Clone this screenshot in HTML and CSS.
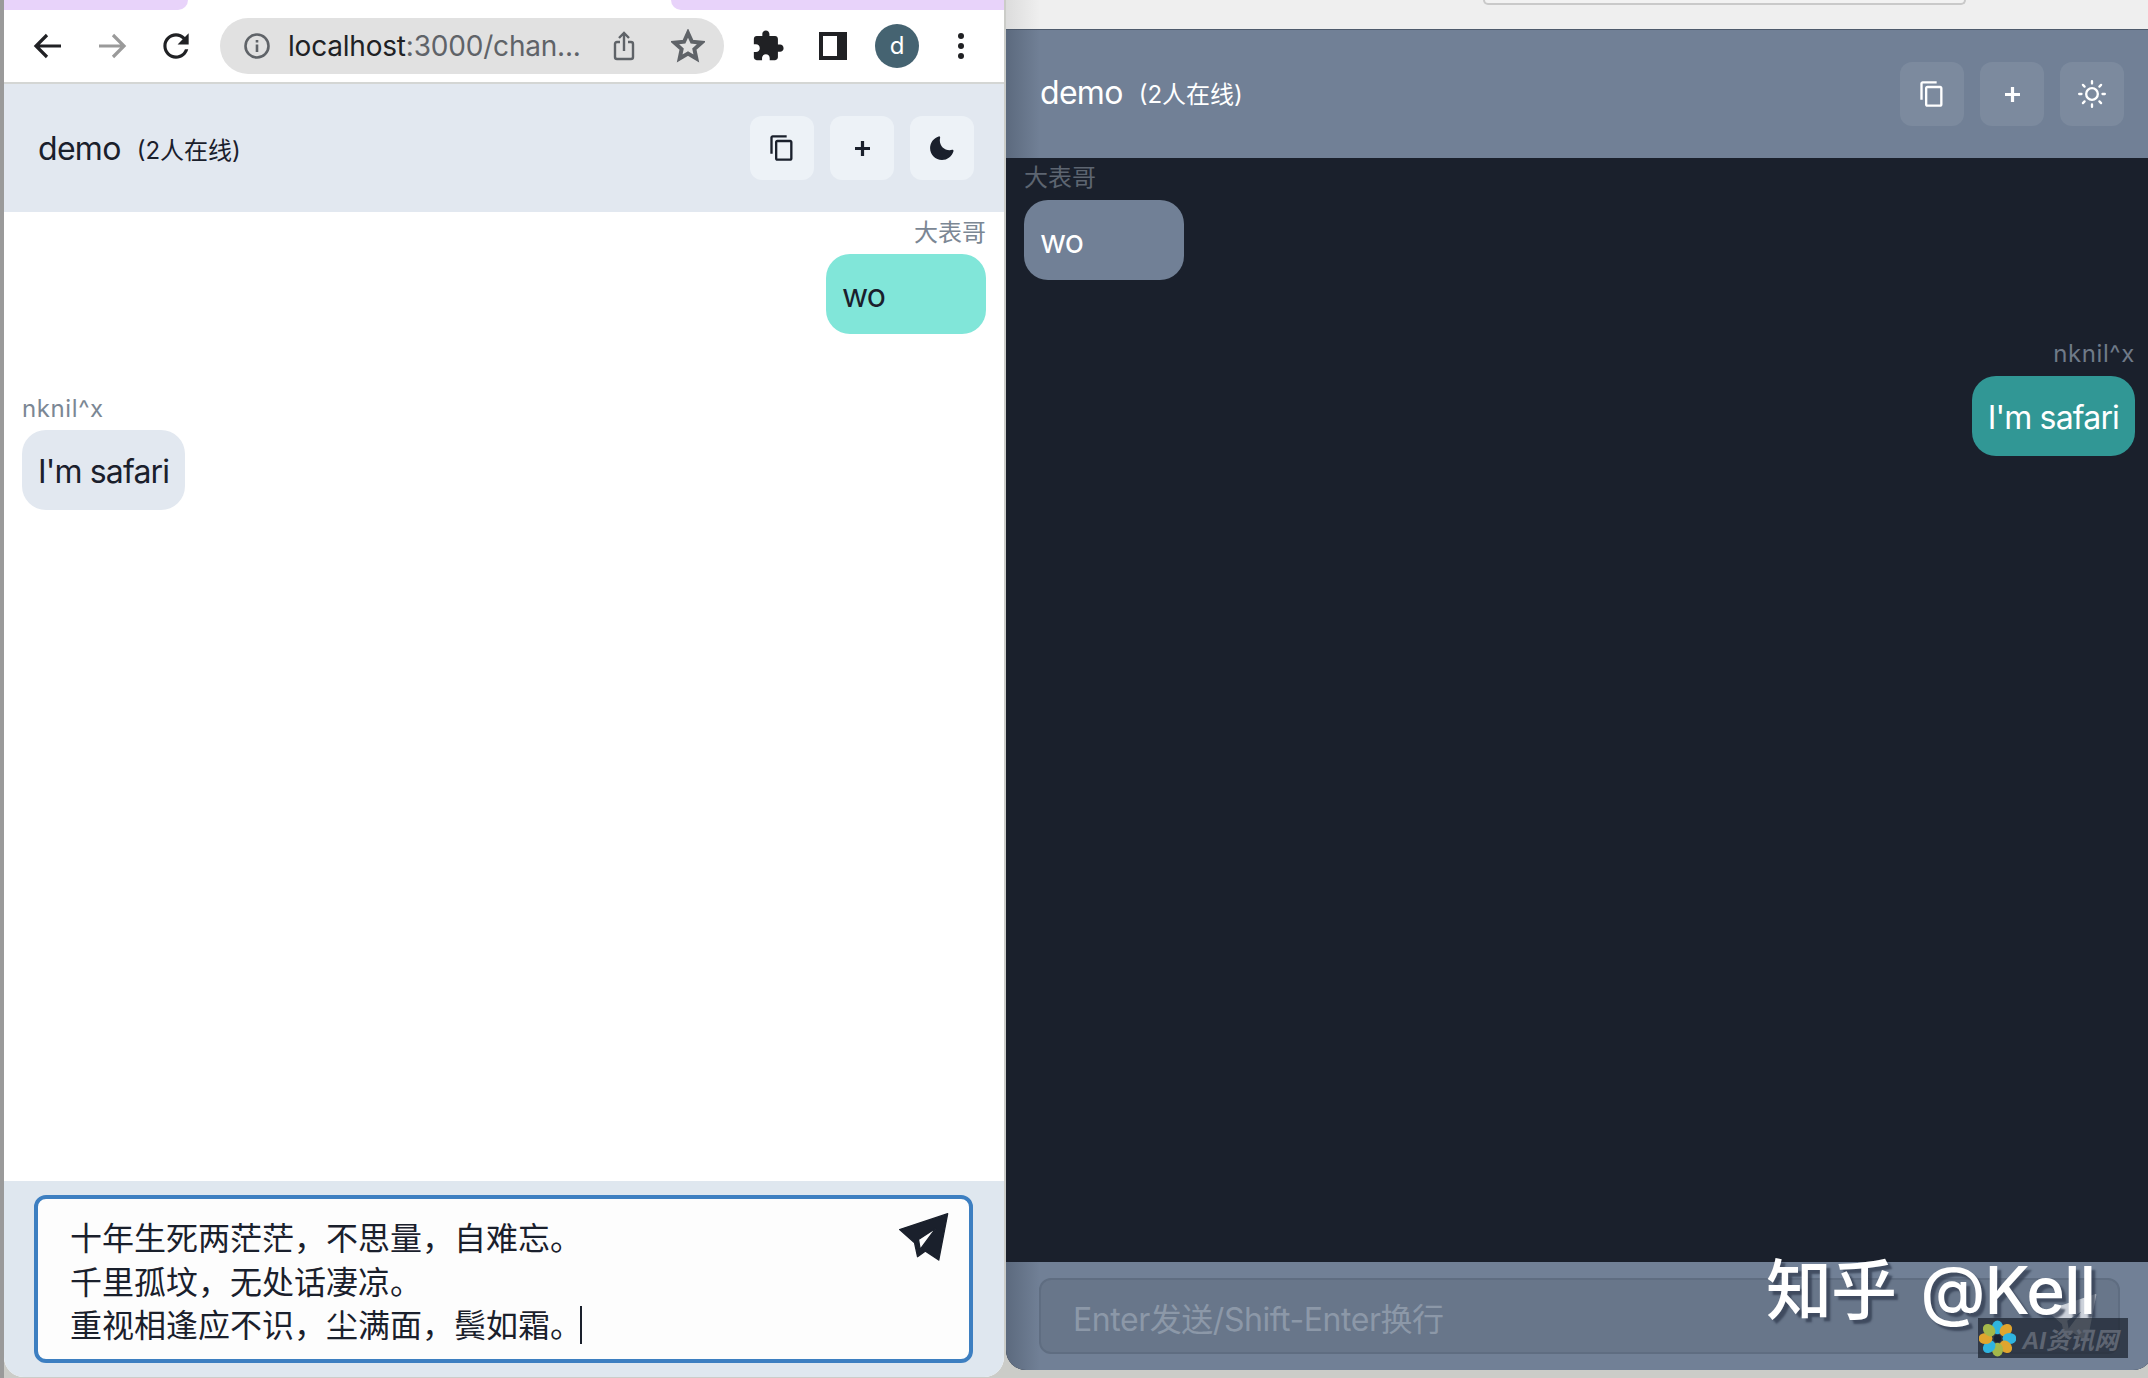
FILE: index.html
```html
<!DOCTYPE html>
<html lang="zh">
<head>
<meta charset="utf-8">
<title>demo</title>
<link rel="stylesheet" href="styles.css">
</head>
<body>
<main class="desk">
  <section class="win win-light">
    <div class="tabstrip">
      <div class="tab-left"></div>
      <div class="tab-active"></div>
      <div class="tab-right"></div>
    </div>
    <div class="toolbar">
      <svg class="nav nav-back" viewBox="0 0 32 32"><path d="M29 16H5M15 5 4 16l11 11"/></svg>
      <svg class="nav nav-forward" viewBox="0 0 32 32"><path d="M3 16h24M17 5l11 11-11 11"/></svg>
      <svg class="reload" viewBox="0 0 24 24"><path d="M17.65 6.35C16.2 4.9 14.21 4 12 4c-4.42 0-7.99 3.58-7.99 8s3.57 8 7.99 8c3.73 0 6.84-2.55 7.73-6h-2.08c-.82 2.33-3.04 4-5.65 4-3.31 0-6-2.69-6-6s2.69-6 6-6c1.66 0 3.14.69 4.22 1.78L13 11h7V4l-2.35 2.35z"/></svg>
      <div class="omnibox">
        <svg class="info" viewBox="0 0 28 28"><circle cx="14" cy="14" r="11.5"/><path d="M14 12.5V20M14 8v2.5"/></svg>
        <span class="url"><span class="url-host">localhost</span>:3000/chan...</span>
        <svg class="share" viewBox="0 0 24 32"><path d="M8 12H5q-2 0-2 2v13q0 2 2 2h14q2 0 2-2V14q0-2-2-2h-3M12 21V3M7 8l5-5 5 5"/></svg>
        <svg class="star" viewBox="0 0 24 24"><path d="m12 2.8 2.8 6.2 6.7.7-5 4.5 1.4 6.6-5.9-3.4-5.9 3.4 1.4-6.6-5-4.5 6.7-.7z"/></svg>
      </div>
      <svg class="puzzle" viewBox="0 0 24 24"><path d="M20.5 11H19V7c0-1.1-.9-2-2-2h-4V3.5C13 2.12 11.88 1 10.5 1S8 2.12 8 3.5V5H4c-1.1 0-1.99.9-1.99 2v3.8H3.5c1.49 0 2.7 1.21 2.7 2.7s-1.21 2.7-2.7 2.7H2V20c0 1.1.9 2 2 2h3.8v-1.5c0-1.49 1.21-2.7 2.7-2.7 1.49 0 2.7 1.21 2.7 2.7V22H17c1.1 0 2-.9 2-2v-4h1.5c1.38 0 2.5-1.12 2.5-2.5S21.88 11 20.5 11z"/></svg>
      <div class="sidepanel"><div class="sidepanel-gap"></div></div>
      <div class="avatar">d</div>
      <div class="kebab"><i></i><i></i><i></i></div>
    </div>
    <header class="app-header">
      <div class="title"><span class="room">demo</span><span class="count">(2人在线)</span></div>
      <div class="actions">
        <button class="action"><svg class="ic-copy" viewBox="0 0 24 24"><path d="M16 1H4c-1.1 0-2 .9-2 2v14h2V3h12V1zm3 4H8c-1.1 0-2 .9-2 2v14c0 1.1.9 2 2 2h11c1.1 0 2-.9 2-2V7c0-1.1-.9-2-2-2zm0 16H8V7h11v14z"/></svg></button>
        <button class="action"><svg class="ic-plus" viewBox="0 0 14 14"><path d="M7 0v14M0 7h14"/></svg></button>
        <button class="action"><svg class="ic-moon" viewBox="0 0 24 24"><path d="M21.4,13.7C20.6,13.9,19.8,14,19,14c-5,0-9-4-9-9c0-0.8,0.1-1.6,0.3-2.4c0.1-0.3,0-0.7-0.3-1 c-0.3-0.3-0.6-0.4-1-0.3C4.3,2.7,1,7.1,1,12c0,6.1,4.9,11,11,11c4.9,0,9.3-3.3,10.6-8.1c0.1-0.3,0-0.7-0.3-1 C22.1,13.7,21.7,13.6,21.4,13.7z"/></svg></button>
      </div>
    </header>
    <div class="messages">
      <div class="msg msg-mine">
        <div class="sender">大表哥</div>
        <div class="bubble bubble-teal">wo</div>
      </div>
      <div class="msg">
        <div class="sender sender-latin">nknil^x</div>
        <div class="bubble bubble-gray">I'm safari</div>
      </div>
    </div>
    <div class="composer">
      <div class="field field-focus">
        <div class="line">十年生死两茫茫，不思量，自难忘。</div>
        <div class="line">千里孤坟，无处话凄凉。</div>
        <div class="line">重视相逢应不识，尘满面，鬓如霜。<span class="caret"></span></div>
        <svg class="send" viewBox="50 45 160 155"><path fill-rule="evenodd" d="M58 100 203 52 176 192 136 165 112 182 103 140ZM168 95 115 130 120 160Z"/></svg>
      </div>
    </div>
  </section>

  <section class="win win-dark">
    <div class="chrome-strip"><div class="safari-bar"></div></div>
    <header class="app-header">
      <div class="title"><span class="room">demo</span><span class="count">(2人在线)</span></div>
      <div class="actions">
        <button class="action"><svg class="ic-copy" viewBox="0 0 24 24"><path d="M16 1H4c-1.1 0-2 .9-2 2v14h2V3h12V1zm3 4H8c-1.1 0-2 .9-2 2v14c0 1.1.9 2 2 2h11c1.1 0 2-.9 2-2V7c0-1.1-.9-2-2-2zm0 16H8V7h11v14z"/></svg></button>
        <button class="action"><svg class="ic-plus" viewBox="0 0 14 14"><path d="M7 0v14M0 7h14"/></svg></button>
        <button class="action"><svg class="ic-sun" viewBox="0 0 24 24"><circle cx="12" cy="12" r="5"/><path d="M12 1v2M12 21v2M4.22 4.22l1.42 1.42M18.36 18.36l1.42 1.42M1 12h2M21 12h2M4.22 19.78l1.42-1.42M18.36 5.64l1.42-1.42"/></svg></button>
      </div>
    </header>
    <div class="messages">
      <div class="msg">
        <div class="sender">大表哥</div>
        <div class="bubble bubble-slate">wo</div>
      </div>
      <div class="msg msg-mine">
        <div class="sender sender-latin">nknil^x</div>
        <div class="bubble bubble-deep">I'm safari</div>
      </div>
    </div>
    <div class="composer">
      <div class="field field-dark">
        <div class="placeholder">Enter发送/Shift-Enter换行</div>
        <svg class="send" viewBox="50 45 160 155"><path fill-rule="evenodd" d="M58 100 203 52 176 192 136 165 112 182 103 140ZM168 95 115 130 120 160Z"/></svg>
      </div>
    </div>
  </section>

  <div class="mark-zhihu">知乎 @Kell</div>
  <div class="mark-site">
    <svg class="flower" viewBox="0 0 40 40">
      <g>
        <ellipse class="p-blue" cx="20" cy="8" rx="6" ry="7.5"/>
        <ellipse class="p-gold" cx="29" cy="11" rx="6" ry="7.5" transform="rotate(45 29 11)"/>
        <ellipse class="p-blue" cx="33" cy="20" rx="7.5" ry="6"/>
        <ellipse class="p-gold" cx="29" cy="29" rx="6" ry="7.5" transform="rotate(-45 29 29)"/>
        <ellipse class="p-green" cx="20" cy="32" rx="6" ry="7.5"/>
        <ellipse class="p-blue" cx="11" cy="29" rx="6" ry="7.5" transform="rotate(45 11 29)"/>
        <ellipse class="p-gold" cx="7" cy="20" rx="7.5" ry="6"/>
        <ellipse class="p-green" cx="11" cy="11" rx="6" ry="7.5" transform="rotate(-45 11 11)"/>
      </g>
      <circle class="p-core" cx="20" cy="20" r="4"/>
    </svg>
    <span class="site-name">AI资讯网</span>
  </div>
</main>
</body>
</html>
```

FILE: styles.css
```css
* { box-sizing: border-box; }

html, body {
  margin: 0;
  width: 2148px;
  height: 1378px;
  overflow: hidden;
}

body {
  background: #cbccc8;
  font-family: Inter, "Noto Sans CJK SC", sans-serif;
  color: #1a202c;
}

.desk {
  position: relative;
  display: flex;
  width: 2148px;
  height: 1378px;
  overflow: hidden;
  padding-left: 4px;
  gap: 2px;
  background: linear-gradient(90deg, #9a9a9a 0 4px, #cbccc8 4px);
}

.win {
  display: flex;
  flex-direction: column;
  flex: none;
  overflow: hidden;
}

.win-light {
  width: 1000px;
  height: 1377px;
  background: #fff;
  border-radius: 0 0 20px 20px;
}

.win-dark {
  width: 1147px;
  height: 1370px;
  background: #1a202c;
  color: #fff;
  border-radius: 0 0 20px 20px;
}

/* browser chrome */
.tabstrip {
  display: flex;
  flex: none;
  height: 10px;
}
.tab-left { width: 184px; background: #e8d3fa; border-radius: 0 0 14px 0; }
.tab-active { flex: 1; background: #fff; }
.tab-right { width: 333px; background: #e8d3fa; border-radius: 0 0 0 14px; }

.toolbar {
  display: flex;
  align-items: center;
  flex: none;
  height: 74px;
  padding: 0 0 0 28px;
  background: #fff;
  border-bottom: 2px solid #d4d6d4;
}

.nav {
  flex: none;
  width: 32px;
  height: 32px;
  fill: none;
  stroke-width: 3.2;
}
.nav-back { stroke: #202124; }
.nav-forward { margin-left: 32px; stroke: #9a9a9a; }

.reload {
  flex: none;
  width: 38px;
  height: 38px;
  margin-left: 29px;
  fill: #202124;
}

.omnibox {
  display: flex;
  align-items: center;
  flex: none;
  width: 504px;
  height: 56px;
  margin-left: 25px;
  padding-left: 23px;
  border-radius: 28px;
  background: #e1e1e1;
}

.info {
  flex: none;
  width: 28px;
  height: 28px;
  fill: none;
  stroke: #5f6368;
  stroke-width: 2.6;
}

.url {
  flex: none;
  width: 300px;
  margin-left: 17px;
  font-size: 28px;
  letter-spacing: -0.2px;
  color: #5f6368;
  white-space: nowrap;
}
.url-host { color: #202124; }

.share {
  flex: none;
  width: 24px;
  height: 34px;
  margin-left: 24px;
  fill: none;
  stroke: #5f6368;
  stroke-width: 2.4;
}

.star {
  flex: none;
  width: 34px;
  height: 34px;
  margin-left: 35px;
  fill: none;
  stroke: #5f6368;
  stroke-width: 2.8;
}

.puzzle {
  flex: none;
  width: 34px;
  height: 34px;
  margin-left: 27px;
  fill: #202124;
}

.sidepanel {
  flex: none;
  width: 28px;
  height: 28px;
  margin-left: 34px;
  padding: 4px 10px 4px 4px;
  background: #202124;
}
.sidepanel-gap { width: 14px; height: 20px; background: #fff; }

.avatar {
  flex: none;
  width: 44px;
  height: 44px;
  margin-left: 28px;
  border-radius: 50%;
  background: #456371;
  color: #fff;
  font-size: 24px;
  line-height: 44px;
  text-align: center;
}

.kebab {
  display: flex;
  flex-direction: column;
  gap: 4px;
  flex: none;
  margin-left: 39px;
}
.kebab i {
  display: block;
  width: 6px;
  height: 6px;
  border-radius: 50%;
  background: #202124;
}

/* app */
.app-header {
  display: flex;
  align-items: center;
  justify-content: space-between;
  flex: none;
  height: 128px;
  padding: 0 30px 0 34px;
  background: #e2e8f0;
}

.win-dark .app-header {
  padding: 0 29px 0 34px;
  background: linear-gradient(90deg, #5c6a7e, #718096 34px);
}

.win-dark .title { margin-bottom: 3px; }

.title { display: flex; align-items: center; }
.room { font-size: 32px; letter-spacing: -0.7px; }
.count { margin-left: 16px; font-size: 24px; }

.actions { display: flex; gap: 16px; }

.action {
  display: flex;
  align-items: center;
  justify-content: center;
  width: 64px;
  height: 64px;
  padding: 0;
  border: 0;
  border-radius: 12px;
  background: #edf2f7;
  color: inherit;
}
.win-dark .action { background: #7c8a9e; color: #fff; }

.ic-copy { width: 28px; height: 28px; fill: currentColor; }
.ic-plus { width: 15px; height: 15px; fill: none; stroke: currentColor; stroke-width: 3; }
.ic-moon { width: 26px; height: 26px; fill: currentColor; }
.ic-sun { width: 28px; height: 28px; fill: none; stroke: currentColor; stroke-width: 2; stroke-linecap: round; }

.messages {
  flex: 1;
  padding: 0 18px;
  min-height: 0;
}
.win-light .messages { background: #fff; }

.msg {
  display: flex;
  flex-direction: column;
  align-items: flex-start;
  margin-bottom: 56px;
  padding-top: 2px;
}
.msg + .msg { padding-top: 0; }
.win-dark .msg:first-child { padding-top: 2px; }

.msg-mine { align-items: flex-end; }

.sender {
  margin-bottom: 2px;
  font-size: 24px;
  line-height: 38px;
  color: #7b8794;
}
.sender-latin { letter-spacing: .6px; }
.win-dark .sender { color: #5d6571; line-height: 36px; margin-bottom: 4px; }
.win-dark .msg-mine .sender { color: #6f7a88; }

.bubble {
  min-width: 160px;
  height: 80px;
  padding: 0 16px;
  border-radius: 24px;
  font-size: 32px;
  line-height: 84px;
  letter-spacing: -0.85px;
}
.bubble-teal { background: #81e6d9; }
.bubble-gray { background: #e2e8f0; }
.bubble-slate { background: #718096; color: #fff; }
.bubble-deep { background: #319795; color: #fff; }

.composer {
  flex: none;
  padding: 14px 31px 14px 30px;
  background: #dfe7ef;
}
.win-dark .composer {
  padding: 16px 33px;
  background: linear-gradient(90deg, #5c6a7e, #718096 34px);
}

.field {
  position: relative;
  border-radius: 12px;
}

.field-focus {
  height: 168px;
  padding: 16px 32px 0;
  border: 4px solid #3d7fc1;
  background: #fdfdfd;
  font-family: "Noto Sans CJK SC", sans-serif;
  font-size: 32px;
  line-height: 43.5px;
  white-space: nowrap;
}

.caret {
  display: inline-block;
  width: 2px;
  height: 38px;
  margin-left: -2px;
  vertical-align: -7px;
  background: #1a202c;
}

.send {
  position: absolute;
  top: 12px;
  right: 19px;
  width: 53px;
  height: 52px;
  fill: #1a202c;
  stroke: #1a202c;
  stroke-width: 4;
  stroke-linejoin: round;
}

.field-dark {
  height: 76px;
  padding-left: 32px;
  border: 2px solid #5f6d81;
  background: #68768a;
}

.placeholder {
  font-size: 32px;
  line-height: 80px;
  letter-spacing: -0.45px;
  color: #8c98a8;
  white-space: nowrap;
}

.field-dark .send {
  top: 12px;
  right: 20px;
  fill: #d8dde4;
  stroke: #d8dde4;
  opacity: .9;
}

/* watermarks over the capture */
.mark-zhihu {
  position: absolute;
  left: 1766px;
  top: 1251px;
  font-family: Inter, "Noto Sans CJK SC", sans-serif;
  font-size: 66px;
  font-weight: 500;
  line-height: 78px;
  letter-spacing: -1px;
  word-spacing: 8px;
  color: #fff;
  white-space: nowrap;
  text-shadow: 4px 4px 2px rgba(50, 60, 80, .75);
}

.mark-site {
  position: absolute;
  left: 1978px;
  top: 1318px;
  display: flex;
  align-items: center;
  width: 150px;
  height: 40px;
  padding-left: 1px;
  background: rgba(30, 37, 50, .75);
}

.flower { flex: none; width: 37px; height: 37px; }
.p-blue { fill: #2fb4e0; }
.p-gold { fill: #e0a52e; }
.p-green { fill: #a4b84a; }
.p-core { fill: #1c2230; }

.site-name {
  margin-left: 6px;
  font-family: "Liberation Sans", "Noto Sans CJK SC", sans-serif;
  font-size: 24px;
  font-weight: 700;
  font-style: italic;
  color: #5e6572;
  white-space: nowrap;
}

.chrome-strip {
  flex: none;
  height: 30px;
  background: linear-gradient(90deg, #dcdcdc, #efefef 34px);
  border-bottom: 1px solid #4e5a6c;
}

.safari-bar {
  width: 483px;
  height: 5px;
  margin-left: 477px;
  border: 2px solid #c9c9c9;
  border-top: 0;
  border-radius: 0 0 8px 8px;
  background: #f2f2f2;
}
```
